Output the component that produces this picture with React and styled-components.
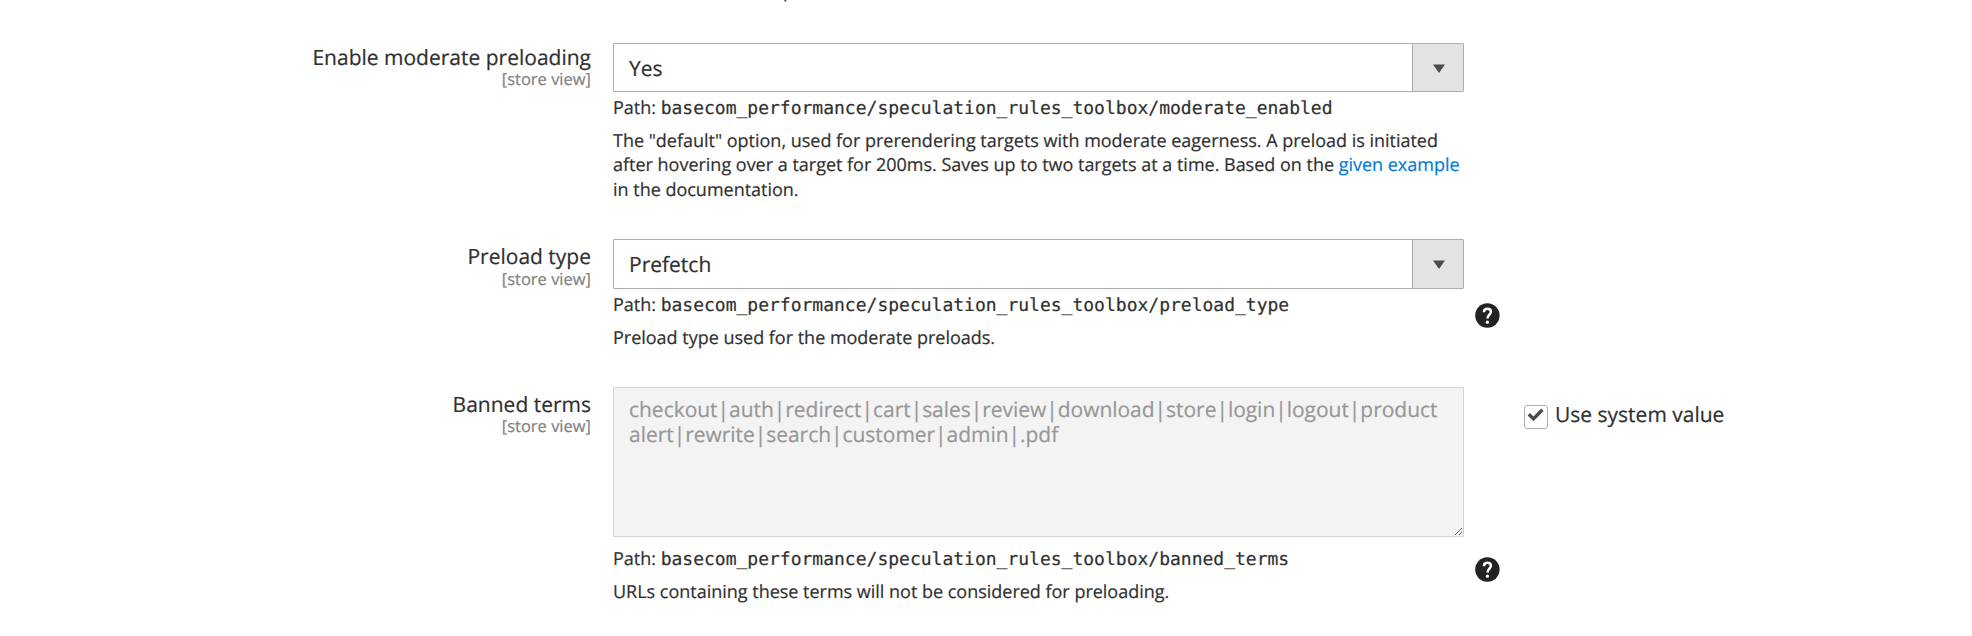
import React from "react";
import styled, { createGlobalStyle } from "styled-components";

const GlobalStyle = createGlobalStyle`
  *, *::before, *::after { box-sizing: border-box; }
  html, body { margin: 0; background: #fff; }
  body {
    overflow: hidden;
    color: #303030;
    font-family: "Open Sans", "Noto Sans", sans-serif;
    font-size: 21px;
    line-height: 1.36;
    text-rendering: geometricPrecision;
    -webkit-text-stroke: 0.2px currentColor;
  }
`;

const Fieldset = styled.main`
  display: flex;
  flex-direction: column;
  width: 1972px;
  height: 636px;
  overflow: hidden;
`;

const Row = styled.div`
  display: grid;
  flex: none;
  grid-template-columns: 590px 851px 1fr;
  column-gap: 23px;
  height: ${(p) => p.$height}px;
`;

const ClippedNote = styled.div`
  height: 43px;
  padding-left: 170px;
  overflow: hidden;
  font-size: 18px;
  line-height: 24px;
  grid-column: 2;

  span { display: block; margin-top: -21px; }
`;

const Label = styled.label`
  display: flex;
  flex-direction: column;
  align-items: flex-end;
  margin-right: -1px;
  padding-top: ${(p) => p.$top}px;
  line-height: 28px;
`;

const Scope = styled.span`
  margin-top: ${(p) => p.$gap}px;
  color: #808080;
  font-size: 16.5px;
  line-height: 20px;
`;

const Control = styled.div`
  display: flex;
  flex-direction: column;
`;

const SelectBox = styled.div`
  display: flex;
  flex: none;
  justify-content: space-between;
  height: ${(p) => p.$height}px;
  border: 1px solid #adadad;
  border-radius: 1px;
`;

const SelectValue = styled.span`
  padding: 1px 0 0 15px;
  line-height: 48px;
`;

const SelectArrow = styled.span`
  display: flex;
  justify-content: center;
  width: 51px;
  padding: 20px 0 0 1px;
  border-left: 1px solid #adadad;
  background: #e3e3e3;
`;

const TextArea = styled.textarea`
  display: block;
  flex: none;
  width: 851px;
  height: 150px;
  margin: 0;
  padding: 10px 12px 8px 15px;
  border: 1px solid #d4d4d4;
  border-radius: 1px;
  background: #f3f3f3;
  color: #979797;
  font: inherit;
  line-height: 25px;
  letter-spacing: -0.035px;
  text-rendering: inherit;
  resize: both;
  outline: none;
`;

const Note = styled.div`
  padding-top: ${(p) => p.$top}px;
  font-size: 18px;
  line-height: 24.6px;
  letter-spacing: -0.01px;

  p { margin: 0; }
  p + p { margin-top: 8.2px; }
`;

const Path = styled.code`
  font-family: "DejaVu Sans Mono", monospace;
  font-size: 18px;
  line-height: 1;
  letter-spacing: 0;
`;

const Link = styled.a`
  color: #007bdb;
  text-decoration: none;
`;

const Aside = styled.div`
  display: flex;
  align-items: flex-start;
  margin-left: -12px;
`;

const HelpIcon = styled.svg`
  flex: none;
  width: 25px;
  height: 25px;
  margin-top: ${(p) => p.$top}px;
`;

const UseDefault = styled.label`
  display: flex;
  align-items: flex-start;
  margin: 18px 0 0 24px;
`;

const CheckBox = styled.span`
  display: block;
  width: 24px;
  height: 24px;
  border: 1px solid #adadad;
  border-radius: 3px;

  svg { display: block; width: 22px; height: 22px; }
`;

const CheckText = styled.span`
  margin: -4px 0 0 7px;
  line-height: 28px;
`;

function Select({ value, height }) {
  return (
    <SelectBox $height={height}>
      <SelectValue>{value}</SelectValue>
      <SelectArrow>
        <svg width="12" height="9" viewBox="0 0 12 9">
          <path d="M0 .4h12L6 9z" fill="#514943" />
        </svg>
      </SelectArrow>
    </SelectBox>
  );
}

function Help({ top }) {
  return (
    <HelpIcon $top={top} viewBox="0 0 25 25">
      <circle cx="12.4" cy="12.5" r="12.2" fill="#222" />
      <path d="M8.9 9.2c0-2.200 1.500-3.400 3.500-3.400s3.500 1.200 3.500 3c0 2.700-3.400 3.300-3.400 6.800" fill="none" stroke="#fff" strokeWidth="2.5" />
      <circle cx="12.4" cy="19.2" r="1.6" fill="#fff" />
    </HelpIcon>
  );
}

function Field({ label, labelTop, scopeGap, height, control, noteTop, path, children, aside }) {
  return (
    <Row $height={height}>
      <Label $top={labelTop}>
        {label}
        <Scope $gap={scopeGap}>[store view]</Scope>
      </Label>
      <Control>
        {control}
        <Note $top={noteTop}>
          <p>Path: <Path>{path}</Path></p>
          <p>{children}</p>
        </Note>
      </Control>
      {aside && <Aside>{aside}</Aside>}
    </Row>
  );
}

const bannedTerms =
  "checkout|auth|redirect|cart|sales|review|download|store|login|logout|product\nalert|rewrite|search|customer|admin|.pdf";

export default function App() {
  return (
    <>
      <GlobalStyle />
      <Fieldset>
        <Row $height={43}>
          <span />
          <ClippedNote><span>p</span></ClippedNote>
        </Row>
        <Field
          label="Enable moderate preloading"
          labelTop={1}
          scopeGap={-3}
          height={196}
          control={<Select value="Yes" height={49} />}
          noteTop={4}
          path="basecom_performance/speculation_rules_toolbox/moderate_enabled"
        >
          The "default" option, used for prerendering targets with moderate eagerness. A preload is initiated
          after hovering over a target for 200ms. Saves up to two targets at a time. Based on the{" "}
          <Link href="#">given example</Link> in the documentation.
        </Field>
        <Field
          label="Preload type"
          labelTop={4}
          scopeGap={-2}
          height={148}
          control={<Select value="Prefetch" height={50} />}
          noteTop={4}
          path="basecom_performance/speculation_rules_toolbox/preload_type"
          aside={<Help top={64} />}
        >
          Preload type used for the moderate preloads.
        </Field>
        <Field
          label="Banned terms"
          labelTop={4}
          scopeGap={-3}
          height={249}
          control={<TextArea disabled defaultValue={bannedTerms} />}
          noteTop={10}
          path="basecom_performance/speculation_rules_toolbox/banned_terms"
          aside={
            <>
              <Help top={170} />
              <UseDefault>
                <CheckBox>
                  <svg viewBox="0 0 22 22">
                    <path d="M3.8 8.2l4.7 4.7L17.4 3.7" fill="none" stroke="#514943" strokeWidth="3.4" />
                  </svg>
                </CheckBox>
                <CheckText>Use system value</CheckText>
              </UseDefault>
            </>
          }
        >
          URLs containing these terms will not be considered for preloading.
        </Field>
      </Fieldset>
    </>
  );
}
